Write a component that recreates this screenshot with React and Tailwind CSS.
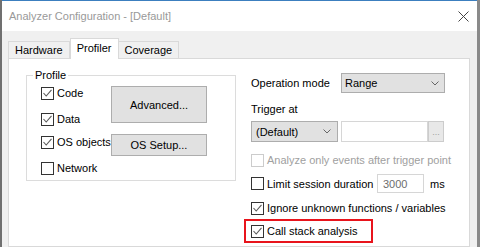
import React from "react";

const FONT = { fontFamily: '"Liberation Sans", Arial, sans-serif' };

function Check({ checked, disabled }) {
  return (
    <span
      className={`w-[13px] h-[13px] shrink-0 flex items-center justify-center bg-white border ${
        disabled ? "border-[#cccccc]" : "border-[#333333]"
      }`}
    >
      {checked && (
        <svg width="11" height="11" viewBox="0 0 11 11">
          <path d="M1.5 5 L4.2 8 L9.5 1.8" stroke="#5a5a5a" strokeWidth="1.1" fill="none" />
        </svg>
      )}
    </span>
  );
}

function CheckRow({ label, checked, disabled, className = "" }) {
  return (
    <div className={`flex items-center ${className}`}>
      <Check checked={checked} disabled={disabled} />
      <span className={`ml-[3px] whitespace-nowrap ${disabled ? "text-[#a0a0a0]" : "text-black"}`}>
        {label}
      </span>
    </div>
  );
}

function Chevron() {
  return (
    <svg width="8" height="5" viewBox="0 0 8 5" className="shrink-0">
      <path d="M0.5 0.5 L4 4 L7.5 0.5" stroke="#666" strokeWidth="1" fill="none" />
    </svg>
  );
}

function Select({ value, className = "" }) {
  return (
    <div
      className={`flex items-center justify-between bg-[#e1e1e1] border border-[#adadad] ${className}`}
    >
      <span>{value}</span>
      <Chevron />
    </div>
  );
}

function Tab({ label, active }) {
  return active ? (
    <div className="relative z-10 h-[21px] px-[6px] bg-white border border-b-0 border-[#d9d9d9] flex items-start pt-[2px]">
      {label}
    </div>
  ) : (
    <div className="h-[18px] px-[6px] bg-[#f0f0f0] border border-b-0 border-[#d9d9d9] flex items-start pt-[1px] -mx-px first:mx-0">
      {label}
    </div>
  );
}

export default function App() {
  return (
    <div className="w-[480px] h-[247px] overflow-hidden flex text-[11px] leading-[14px] text-black" style={FONT}>
      <div className="w-[2px] bg-[#707070]" />
      <div className="flex-1 flex flex-col border-t border-[#3c7fbf]">
        <div className="h-[30px] bg-white flex items-center justify-between pl-[7px] pr-[8px]">
          <span className="text-[#999999] text-[11px]">Analyzer Configuration - [Default]</span>
          <svg width="11" height="11" viewBox="0 0 11 11">
            <path d="M0.5 0.5 L10.5 10.5 M10.5 0.5 L0.5 10.5" stroke="#444" strokeWidth="1" />
          </svg>
        </div>
        <div className="flex-1 bg-[#f0f0f0] pt-[7px] pl-[6px] pr-[7px] flex flex-col">
          <div className="h-[21px] -mb-px flex items-end">
            <Tab label="Hardware" />
            <Tab label="Profiler" active />
            <Tab label="Coverage" />
          </div>
          <div className="flex-1 bg-white border border-[#d9d9d9] flex">
            {/* Profile group */}
            <div className="relative ml-[17px] mt-[16px] w-[210px] h-[106px] border border-[#dcdcdc] flex">
              <span className="absolute -top-[8px] left-[6px] bg-white px-[2px]">Profile</span>
              <div className="w-[84px] pl-[14px] flex flex-col">
                <CheckRow label="Code" checked className="h-[20px] mt-[7px]" />
                <CheckRow label="Data" checked className="h-[20px] mt-[6px]" />
                <CheckRow label="OS objects" checked className="h-[20px] mt-[3px]" />
                <CheckRow label="Network" className="h-[20px] mt-[6px]" />
              </div>
              <div className="flex flex-col">
                <div className="mt-[10px] w-[96px] h-[37px] bg-[#e1e1e1] border border-[#adadad] flex items-center justify-center">
                  Advanced...
                </div>
                <div className="mt-[11px] w-[96px] h-[22px] bg-[#e1e1e1] border border-[#adadad] flex items-center justify-center">
                  OS Setup...
                </div>
              </div>
            </div>

            {/* Right column */}
            <div className="ml-[15px] mt-[14px] flex flex-col">
              <div className="h-[20px] flex items-center">
                <span className="w-[90px]">Operation mode</span>
                <Select value="Range" className="w-[104px] h-[20px] pl-[3px] pr-[5px]" />
              </div>
              <div className="h-[28px] pt-[9px]">Trigger at</div>
              <div className="h-[21px] flex">
                <Select value="(Default)" className="w-[87px] h-[21px] pl-[4px] pr-[6px]" />
                <div className="ml-[3px] w-[87px] h-[21px] bg-white border border-[#d6d6d6]" />
                <div className="w-[16px] h-[21px] bg-[#e8e8e8] border border-[#cccccc] flex items-center justify-center text-[#a0a0a0] text-[9px]">
                  ...
                </div>
              </div>
              <CheckRow label="Analyze only events after trigger point" disabled className="h-[20px] mt-[8px]" />
              <div className="h-[19px] mt-[4px] flex items-center">
                <CheckRow label="Limit session duration" className="w-[126px]" />
                <div className="w-[47px] h-[19px] border border-[#d6d6d6] bg-white flex items-center pl-[5px] text-[#6d6d6d]">
                  3000
                </div>
                <span className="ml-[6px]">ms</span>
              </div>
              <CheckRow label="Ignore unknown functions / variables" checked className="h-[20px] mt-[5px]" />
              <div className="-ml-[7px] mt-[1px] w-[129px] h-[24px] border-2 border-[#e8141c] flex items-center pl-[5px]">
                <CheckRow label="Call stack analysis" checked />
              </div>
            </div>
          </div>
        </div>
      </div>
      <div className="w-[3px] bg-[#8a8a8a]" />
    </div>
  );
}
